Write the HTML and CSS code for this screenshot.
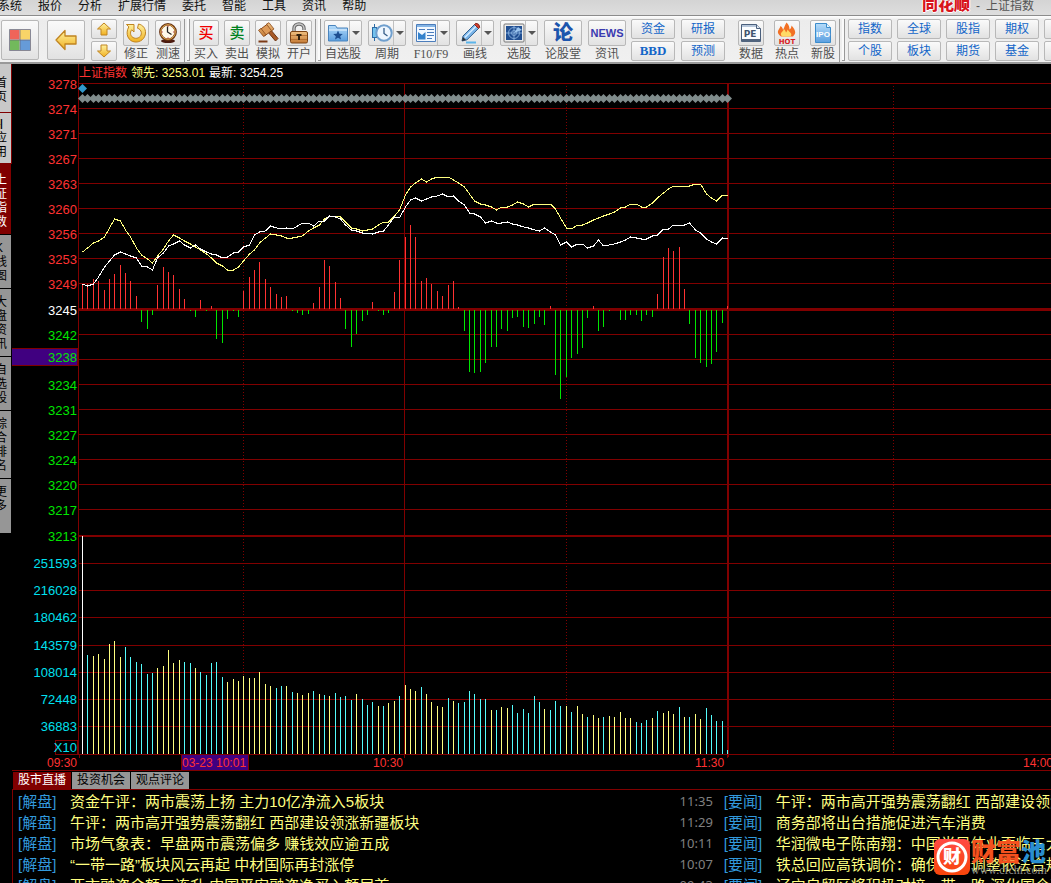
FILE: index.html
```html
<!DOCTYPE html>
<html lang="zh-CN">
<head>
<meta charset="utf-8">
<title>同花顺 - 上证指数</title>
<link rel="stylesheet" href="styles.css">
</head>
<body>
<svg class="defs" width="0" height="0" aria-hidden="true">
  <defs>
    <linearGradient id="gold" x1="0" y1="0" x2="0" y2="1"><stop offset="0" stop-color="#fff2a0"/><stop offset="1" stop-color="#f0b020"/></linearGradient>
    <linearGradient id="sky" x1="0" y1="0" x2="0" y2="1"><stop offset="0" stop-color="#b5dcfa"/><stop offset="1" stop-color="#5b9fe0"/></linearGradient>
    <linearGradient id="wood" x1="0" y1="0" x2="0" y2="1"><stop offset="0" stop-color="#f0c080"/><stop offset="1" stop-color="#c47a35"/></linearGradient>
    <linearGradient id="badge" x1="0" y1="0" x2="0" y2="1"><stop offset="0" stop-color="#ff4a45"/><stop offset="1" stop-color="#f8450a"/></linearGradient>
  </defs>
</svg>

<header class="menubar">
  <nav class="menu">
    <a href="#">系统</a><a href="#">报价</a><a href="#">分析</a><a href="#">扩展行情</a><a href="#">委托</a><a href="#">智能</a><a href="#">工具</a><a href="#">资讯</a><a href="#">帮助</a>
  </nav>
  <div class="caption"><strong class="brand">同花顺</strong><span>-</span><span>上证指数</span></div>
</header>

<div class="toolbar">
  <div class="group group-nav">
    <button class="key tile tile-home" aria-label="主页"><svg width="22" height="22" viewBox="0 0 22 22"><rect x="1" y="1" width="9.5" height="9.5" fill="#f0645a"/><rect x="11" y="1" width="10" height="9.5" fill="#f8d468"/><rect x="1" y="11" width="9.5" height="10" fill="#72b95c"/><rect x="11" y="11" width="10" height="10" fill="#669bd8"/><path d="M.5.5h21v21H.5zM11 1v20M1 11h20" fill="none" stroke="#667" stroke-opacity=".75"/></svg></button>
    <button class="key tile" aria-label="后退"><svg width="24" height="22" viewBox="0 0 24 22"><path d="M2 11L11 1.500V7h11v8H11v5.500z" fill="url(#gold)" stroke="#c08420" stroke-width="1.300" stroke-linejoin="round"/></svg></button>
    <div class="stack stack-arrows">
      <button class="key" aria-label="上翻"><svg width="16" height="14" viewBox="0 0 16 14"><path d="M8 1l6.500 6H11v6H5V7H1.500z" fill="url(#gold)" stroke="#c08420" stroke-linejoin="round"/></svg></button>
      <button class="key" aria-label="下翻"><svg width="16" height="14" viewBox="0 0 16 14"><path d="M8 13l6.500-6H11V1H5v6H1.500z" fill="url(#gold)" stroke="#c08420" stroke-linejoin="round"/></svg></button>
    </div>
    <button class="tool"><span class="key"><svg width="22" height="22" viewBox="0 0 22 22"><path d="M1.500 2.500H9V10L6.700 7.800C4.500 10.500 5.500 14.800 9 16c4 1.300 7.800-1.500 7.300-5.500C16 8.300 14.600 6.800 12.500 6.200L13.500 2C18 3 20.700 6.500 20.500 11c-.3 5.500-5 9.500-10.500 9C3.500 19.500-.3 12 3.800 4.900z" fill="url(#gold)" stroke="#c08420" stroke-linejoin="round"/></svg></span>修正</button>
    <button class="tool"><span class="key"><svg width="22" height="22" viewBox="0 0 22 22"><ellipse cx="11" cy="19" rx="7" ry="2" fill="#4b1a10"/><circle cx="11" cy="10" r="7.700" fill="#fff8e8" stroke="#6a3514" stroke-width="2.400"/><circle cx="11" cy="10" r="7.300" fill="none" stroke="#e8b050"/><path d="M10.500 4.500V10l4 2.500" fill="none" stroke="#222" stroke-width="1.300"/><path d="M11 3.500v1.200M11 15.500v1.200M4.500 10h1.200M16.200 10h1.200" stroke="#a22"/></svg></span>测速</button>
  </div>
  <i class="divider"></i>
  <div class="group group-trade">
    <button class="tool"><span class="key glyph buy">买</span>买入</button>
    <button class="tool"><span class="key glyph sell">卖</span>卖出</button>
    <button class="tool"><span class="key"><svg width="22" height="22" viewBox="0 0 22 22"><path d="M10 9l3-2 8 9.500-2.500 2.500z" fill="#a85a28" stroke="#6e3512"/><path d="M2.500 8l8-6 5 6-8 6z" fill="#dd9a58" stroke="#8a4a1c"/><path d="M1.500 8.300L4 6.500l5 6.300-2.500 1.700zM9.500 2L12 .7l5 6.300-2.500 1.800z" fill="url(#wood)" stroke="#8a4a1c" stroke-width=".8"/><path d="M1.500 18.500h9v2h-9z" fill="#7c3a16"/></svg></span>模拟</button>
    <button class="tool"><span class="key"><svg width="22" height="22" viewBox="0 0 22 22"><path d="M6 10V6.500c0-6 10-6 10 0V8" fill="none" stroke="#666" stroke-width="3.400"/><path d="M6 10V6.500c0-6 10-6 10 0V8" fill="none" stroke="#c8c8c8" stroke-width="1.400"/><rect x="2.500" y="9.500" width="17" height="11.500" rx="1.500" fill="url(#wood)" stroke="#7c4415"/><path d="M3 13.500h16M3 17.500h16" stroke="#a96428" stroke-width=".7"/><path d="M8.500 12h5v2h-1.500v4h-2v-4H8.500z" fill="#33220f"/></svg></span>开户</button>
  </div>
  <i class="divider"></i>
  <div class="group group-quote">
    <button class="tool"><span class="key split"><svg width="22" height="20" viewBox="0 0 22 20"><path d="M1.500 18V2.500h7L10 5h10.500v13z" fill="url(#sky)" stroke="#4a84bd"/><path d="M2 7h18" stroke="#e8f5ff"/><path d="M11 7.500l1.400 3.200 3.400.3-2.600 2.200.8 3.400-3-1.800-3 1.800.8-3.400L6.200 11l3.400-.3z" fill="#1e4f91"/></svg><i class="caret"></i></span>自选股</button>
    <button class="tool"><span class="key split"><svg width="22" height="20" viewBox="0 0 22 20"><path d="M3.500 1v17" stroke="#2c6ba5"/><rect x="1.500" y="4.500" width="4" height="10" fill="#73c2ee" stroke="#2c6ba5"/><circle cx="13" cy="10" r="7.700" fill="#eef6fe" stroke="#6f9fce" stroke-width="2"/><path d="M13 5v5.500l3.500 2.500" fill="none" stroke="#345c87" stroke-width="1.300"/></svg><i class="caret"></i></span>周期</button>
    <button class="tool latin"><span class="key split"><svg width="22" height="20" viewBox="0 0 22 20"><path d="M1.500 1.500h19v17h-19z" fill="#f2f8ff" stroke="#4c7dbb"/><path d="M2 2h18v2H2z" fill="#85b5e5"/><path d="M4 6.500h6M12 6.500h7M12 9.500h7M12 12.500h7M12 15.500h5" stroke="#4a7cbc"/><path d="M3 9l4 3 3.500-3v7.500H3z" fill="#3381cc"/></svg><i class="caret"></i></span>F10/F9</button>
    <button class="tool"><span class="key split"><svg width="22" height="22" viewBox="0 0 22 22"><path d="M7 20.500h10" stroke="#5cb5ea" stroke-width="2"/><path d="M3 19l1-5L15.500 2.500l4 4L8 17.800z" fill="#79b4e9" stroke="#33618f"/><path d="M5.800 15.500L17 4.300" stroke="#d7edff" stroke-width="1.500"/><path d="M15.500 2.500l1.300-1.200q3.500 0 4 4L19.500 6.500z" fill="#d34232" stroke="#85281e"/><path d="M3 19l1-4 3 3z" fill="#333"/></svg><i class="caret"></i></span>画线</button>
    <button class="tool"><span class="key split"><svg width="22" height="20" viewBox="0 0 22 20"><rect x="1" y="1" width="20" height="18" rx="1" fill="#ececec" stroke="#777"/><rect x="3" y="3" width="16" height="14" fill="#214f92"/><g fill="none" stroke="#7fa8d8"><circle cx="11" cy="10" r="5.500"/><circle cx="11" cy="10" r="2.500"/><path d="M11 3v14M3 10h16"/></g><path d="M11 10l4-6 4 3z" fill="#9dc6ef"/></svg><i class="caret"></i></span>选股</button>
    <button class="tool"><span class="key glyph forum">论</span>论股堂</button>
    <button class="tool"><span class="key news-logo">NEWS</span>资讯</button>
  </div>
  <div class="group group-funds">
    <div class="stack"><button class="key">资金</button><button class="key bbd">BBD</button></div>
    <div class="stack"><button class="key">研报</button><button class="key">预测</button></div>
  </div>
  <div class="group group-data">
    <button class="tool"><span class="key"><svg width="22" height="20" viewBox="0 0 22 20"><path d="M1.500 1.500h15l4 4v13h-19z" fill="#fbfdff" stroke="#4a5f7c"/><path d="M2 2h14v2H2z" fill="#b6c6da"/><path d="M16.500 1.500v4h4" fill="#dde6f0" stroke="#4a5f7c"/><path d="M2 16h18v3H2z" fill="#51647e"/><text x="10" y="14" text-anchor="middle" class="icon-pe">PE</text></svg></span>数据</button>
    <button class="tool"><span class="key"><svg width="22" height="22" viewBox="0 0 22 22"><path d="M5 14.500C-1.500 10 4 7 4.500 4c2 1.500 2.500 3 2.500 4C8.500 5 9 3 10.500.5 13 3 13.500 5 13.500 7.500c1.500-1 2-2.500 2-4C19 7.500 21 11 17 14.500z" fill="#f27024"/><path d="M6 14.500c-3-4 1-4.500 2-7.500 1.500 1.500 2 3.500 2 3.500s1.500-1.500 1.500-3c2 3 5.500 4 3 7z" fill="#ffdb66"/><text x="11" y="21.500" text-anchor="middle" class="icon-hot">HOT</text></svg></span>热点</button>
    <button class="tool"><span class="key"><svg width="22" height="22" viewBox="0 0 22 22"><path d="M3.500 1.500h11l4 4v15h-15z" fill="url(#sky)" stroke="#3c8ccb"/><path d="M14.500 1.500v4h4" fill="#e5f5ff" stroke="#3c8ccb"/><text x="11" y="14.500" text-anchor="middle" class="icon-ipo">IPO</text></svg></span>新股</button>
  </div>
  <i class="divider"></i>
  <div class="group group-market">
    <div class="stack"><button class="key">指数</button><button class="key">个股</button></div>
    <div class="stack"><button class="key">全球</button><button class="key">板块</button></div>
    <div class="stack"><button class="key">股指</button><button class="key">期货</button></div>
    <div class="stack"><button class="key">期权</button><button class="key">基金</button></div>
    <div class="stack"><button class="key" aria-label="债券"></button><button class="key" aria-label="外汇"></button></div>
  </div>
</div>

<div class="workspace">
  <aside class="pages">
    <button class="light page-home"><span>首页</span></button>
    <button class="light page-apps"><span><b>▸|</b>应用</span></button>
    <button class="current"><span>上证指数</span></button>
    <button><span>K线图</span></button>
    <button><span>大盘资讯</span></button>
    <button><span>自选股</span></button>
    <button><span>综合排名</span></button>
    <button class="page-more"><span>更多</span></button>
  </aside>
  <main class="content">
    <section class="chart">
      <svg id="chart" role="img" aria-label="上证指数 分时走势"></svg>
      <p class="legend"><span class="name">上证指数</span><span class="lead">领先: 3253.01</span><span class="last">最新: 3254.25</span></p>
    </section>
    <section class="news">
      <div class="tabs"><button class="active">股市直播</button><button>投资机会</button><button>观点评论</button></div>
      <div class="columns">
        <ul class="feed feed-live">
          <li><a class="tag" href="#">[解盘]</a><a class="title" href="#">资金午评：两市震荡上扬 主力10亿净流入5板块</a><time>11:35</time></li>
          <li><a class="tag" href="#">[解盘]</a><a class="title" href="#">午评：两市高开强势震荡翻红 西部建设领涨新疆板块</a><time>11:29</time></li>
          <li><a class="tag" href="#">[解盘]</a><a class="title" href="#">市场气象表：早盘两市震荡偏多 赚钱效应逾五成</a><time>10:11</time></li>
          <li><a class="tag" href="#">[解盘]</a><a class="title" href="#">“一带一路”板块风云再起 中材国际再封涨停</a><time>10:07</time></li>
          <li><a class="tag" href="#">[解盘]</a><a class="title" href="#">两市融资余额三连升 中国平安融资净买入额居首</a><time>09:43</time></li>
        </ul>
        <ul class="feed feed-top">
          <li><a class="tag" href="#">[要闻]</a><a class="title" href="#">午评：两市高开强势震荡翻红 西部建设领涨</a></li>
          <li><a class="tag" href="#">[要闻]</a><a class="title" href="#">商务部将出台措施促进汽车消费</a></li>
          <li><a class="tag" href="#">[要闻]</a><a class="title" href="#">华润微电子陈南翔：中国半导体业面临三大</a></li>
          <li><a class="tag" href="#">[要闻]</a><a class="title" href="#">铁总回应高铁调价：确保票价调整依法合规</a></li>
          <li><a class="tag" href="#">[要闻]</a><a class="title" href="#">辽宁自贸区将积极对接一带一路 深化国企改</a></li>
        </ul>
      </div>
    </section>
  </main>
</div>

<div class="watermark">
  <svg width="36" height="36" viewBox="0 0 36 36"><rect width="36" height="36" rx="6" fill="url(#badge)"/><circle cx="18" cy="18" r="14" fill="none" stroke="#fff" stroke-width="3"/><text x="18" y="24" text-anchor="middle" class="seal">财</text></svg>
  <div class="mark-text"><strong>财富<em>池</em></strong><small>www.cfchi.com</small></div>
</div>
<script src="chart.js"></script>
</body>
</html>
```

FILE: styles.css
```css
* { box-sizing: border-box; }
body {
  margin: 0;
  height: 100vh;
  display: flex;
  flex-direction: column;
  overflow: hidden;
  background: #000;
  font: 12px/14px "Liberation Sans", "Noto Sans CJK SC", sans-serif;
  position: relative;
}
button { font: inherit; color: inherit; border: 0; padding: 0; margin: 0; background: none; }
a { color: inherit; text-decoration: none; }
svg { display: block; }
.defs { position: absolute; }

.menubar {
  flex: none;
  height: 16px;
  overflow: hidden;
  display: flex;
  justify-content: space-between;
  background: linear-gradient(#d4d4d4, #dedede);
  border-bottom: 1px solid #8c8c8c;
  line-height: 12px;
  color: #111;
}
.menu { display: flex; gap: 16px; margin-left: -2px; white-space: nowrap; }
.caption { display: flex; gap: 6px; padding-right: 17px; color: #555; white-space: nowrap; line-height: 13px; }
.brand {
  font-size: 16px;
  line-height: 10px;
  font-weight: 900;
  color: #d8141c;
  text-shadow: 1px 0 #fff, -1px 0 #fff, 0 1px #fff;
}

.toolbar {
  flex: none;
  height: 48px;
  padding-top: 3px;
  display: flex;
  overflow: hidden;
  background: linear-gradient(#fff, #ececec 4px, #f0f0f0);
  border-bottom: 2px solid #999;
  color: #505050;
}
.group { display: flex; flex: none; align-items: flex-start; gap: 6px; }
.group-nav { padding-left: 1px; }
.tile-home { margin-right: 2px; }
.group-trade, .group-market { gap: 5px; }
.group-funds { margin-left: 5px; }
.group-data { margin-left: 13px; gap: 10px; }
.divider {
  flex: none;
  width: 7px;
  margin: 0 2px 0 3px;
  border-left: 1px solid #999;
  position: relative;
}
.divider::after {
  content: "";
  position: absolute;
  inset: 0 1px 1px 2px;
  border: solid #999;
  border-width: 0 1px 1px 0;
  background: #fafafa;
}
.key {
  display: flex;
  align-items: center;
  justify-content: center;
  border: 1px solid #b8b8b8;
  border-radius: 2px;
  background: linear-gradient(#fafafa, #e2e2e2);
}
.tile { width: 38px; height: 40px; margin-top: 1px; }
.stack { display: grid; gap: 2px; grid-template-rows: 20px 20px; width: 44px; color: #1265c8; }
.stack-arrows { width: 26px; }
.bbd { font: bold 13px/14px "Liberation Serif", serif; }
.tool {
  width: 26px;
  margin-top: 1px;
  display: flex;
  flex-direction: column;
  align-items: center;
  line-height: 16px;
  white-space: nowrap;
}
.tool .key { width: 100%; height: 26px; flex: none; }
.group-quote .tool { width: 38px; }
.latin { font: 12px/16px "Liberation Serif", serif; }
.split { justify-content: space-between; padding-left: 2px; }
.caret {
  align-self: stretch;
  width: 12px;
  border-left: 1px solid #c0c0c0;
  display: grid;
  place-items: center;
}
.caret::before { content: ""; border: 4px solid transparent; border-top-color: #555; border-bottom: 0; }
.glyph { font-size: 15px; font-weight: 500; }
.buy { color: #f00000; }
.sell { color: #00821e; }
.forum { font-size: 20px; font-weight: 900; color: #1c55ad; }
.news-logo { font: bold 11px/14px "Liberation Sans", sans-serif; color: #3a3ab0; }
.icon-pe { font: bold 9px "DejaVu Sans", sans-serif; fill: #41546f; }
.icon-hot { font: bold 7px "DejaVu Sans", sans-serif; fill: #d81c24; }
.icon-ipo { font: bold 8px "Liberation Sans", sans-serif; fill: #fff; }

.workspace { flex: 1; min-height: 0; display: flex; }
.pages { flex: none; width: 12px; overflow: hidden; display: flex; flex-direction: column; }
.pages button {
  flex: none;
  width: 11px;
  padding: 6px 0 5px;
  background: #969696;
  border-bottom: 1px solid #000;
  color: #000;
  text-align: left;
  line-height: 14px;
}
.pages span { display: block; width: 12px; margin-left: -5px; word-break: break-all; white-space: normal; }
.pages b { display: block; white-space: nowrap; font-size: 10px; }
.pages .light { width: 12px; background: #c8c8c8; border: solid #800000; border-width: 0 1px 1px 0; }
.pages .page-home { padding: 12px 0 8px; }
.pages .page-apps { padding: 4px 0; }
.pages .current { background: #800000; color: #fff; padding: 9px 0 5px; }
.pages .page-more { padding-bottom: 20px; }

.content { flex: 1; min-width: 0; display: flex; flex-direction: column; }
.chart { flex: none; position: relative; }
.chart > svg { width: 100%; height: 708px; }
.legend { position: absolute; left: 67px; top: 2px; margin: 0; display: flex; gap: 4px; white-space: nowrap; }
.name { color: #ff3232; }
.lead { color: #ffff80; }
.last { color: #fff; }
.axis { font: 13px "Liberation Sans", sans-serif; }
.time { font: 12px "Liberation Sans", sans-serif; fill: #ff3232; }

.news { flex: 1; min-height: 0; display: flex; flex-direction: column; }
.tabs { display: flex; gap: 1px; padding-left: 1px; }
.tabs button { width: 58px; height: 17px; line-height: 17px; background: #969696; color: #000; }
.tabs .active { background: #800000; color: #fff; }
.columns {
  flex: 1;
  min-height: 0;
  overflow: hidden;
  display: flex;
  border: solid #800000;
  border-width: 1px 0 0 1px;
}
.feed { margin: 0; padding: 1px 5px; list-style: none; font-size: 15px; line-height: 21px; }
.feed-live { flex: 0 0 68%; padding-right: 6px; }
.feed-top { flex: 1; min-width: 0; padding-right: 0; }
.feed li { display: flex; white-space: nowrap; }
.tag { flex: 0 0 52px; color: #3299dc; }
.title { flex: 1; min-width: 0; overflow: hidden; color: #ffff80; }
.feed time { font: 13px/21px "Noto Sans", sans-serif; color: #808080; }

.watermark { position: absolute; right: 4px; bottom: 7px; display: flex; gap: 1px; align-items: flex-start; white-space: nowrap; }
.seal { font: 900 18px "Noto Sans CJK SC", sans-serif; fill: #fff; }
.mark-text { width: 76px; }
.mark-text strong { display: block; font-size: 25px; line-height: 26px; font-weight: 900; color: #f4511e; }
.mark-text em { font-style: normal; color: #2a8fd0; }
.mark-text small { display: block; font: 12px/11px "Liberation Serif", serif; color: #8a8a8a; }
```

FILE: chart.js
```js
const NS = 'http://www.w3.org/2000/svg';
const svg = document.getElementById('chart');
const GRID = '#800000';
const LEFT = 66;
const ZERO = 245;
const BASE = 690;

function add(name, attrs, text) {
  const el = document.createElementNS(NS, name);
  for (const key in attrs) el.setAttribute(key, attrs[key]);
  if (text !== undefined) el.textContent = text;
  svg.appendChild(el);
}
const box = (x, y, width, height, fill) =>
  add('rect', { x, y, width, height, fill, 'shape-rendering': 'crispEdges' });
const framed = (x, y, width, height, fill) => {
  box(x, y, width, height, GRID);
  box(x + 1, y + 1, width - 2, height - 2, fill);
};
const minuteX = i => Math.round(70 + i * 5.375);

// Horizontal grid: price pane, then volume pane
const prices = [3278, 3274, 3271, 3267, 3263, 3260, 3256, 3253, 3249, 3245, 3242, 3238, 3234, 3231, 3227, 3224, 3220, 3217, 3213];
const priceY = [19, 44, 69, 94, 119, 144, 169, 194, 219, 245, 270, 295, 320, 345, 370, 395, 420, 445, 471];
const volumes = [251593, 216028, 180462, 143579, 108014, 72448, 36883];
const volumeY = [499, 526, 553, 581, 608, 635, 662];
priceY.concat(volumeY, BASE).forEach(y => box(LEFT, y, '100%', 1, GRID));
box(LEFT, ZERO - 1, '100%', 3, GRID);
box(LEFT, 471, '100%', 2, GRID);
box(0, 706, '100%', 1, GRID);

// Vertical grid
box(LEFT, 0, 1, BASE, GRID);
box(392, 19, 1, BASE - 16, GRID);
box(715, 19, 2, BASE - 16, GRID);
[231, 554, 881].forEach(x => add('line', {
  x1: x + 0.5, x2: x + 0.5, y1: 19, y2: BASE,
  stroke: GRID, 'stroke-dasharray': '1 2', 'shape-rendering': 'crispEdges'
}));

// Price labels
framed(-1, 284, LEFT + 1, 18, '#400080');
prices.forEach((p, i) => add('text', {
  x: 65, y: (p === 3238 ? 293 : priceY[i] + 1) + 5, 'text-anchor': 'end', class: 'axis',
  fill: i < 9 ? '#ff3232' : i === 9 ? '#ffffff' : '#00e600'
}, p));
volumes.forEach((v, i) => add('text', {
  x: 65, y: volumeY[i] + 5, 'text-anchor': 'end', class: 'axis', fill: '#00e0f0'
}, v));
framed(43, 676, 23, 15, '#000');
add('text', { x: 65, y: 688, 'text-anchor': 'end', class: 'axis', fill: '#00e0f0' }, 'X10');

// Lead/lag histogram, in pixels from the zero line
const force = [
  25, 25, 30, 28, 19, 30, 35, 44, 36, 28, 13, -12, -19, -5, 24, 42, 37, 34, 20, 10,
  -1, -7, 9, -1, 3, -29, -33, -9, -1, -7, 18, 32, 39, 47, 30, 22, 15, 12, 13, -1,
  -3, -5, -4, 6, 22, 49, 43, 27, 11, -19, -37, -24, -11, -5, 7, -1, -5, -3, 17, 49,
  72, 84, 72, 28, 31, 25, 18, 13, 24, 28, 2, -21, -62, -63, -62, -53, -37, -37, -19, -21,
  -8, -7, -17, -18, -14, -7, -15, 3, -65, -89, -67, -48, -44, -38, -8, 3, -21, -17, -1, 0,
  -10, -10, -5, -5, -11, -5, -7, 15, 52, 61, 58, 62, 20, -14, -48, -53, -57, -54, -42, -13, 3
];
force.forEach((v, i) => {
  if (v > 0) box(minuteX(i), ZERO - v, 1, v, '#ff3232');
  if (v < 0) box(minuteX(i), ZERO + 1, 1, -v, '#00e600');
});

// Volume bars
const volume = [
  218, 99, 98, 100, 95, 110, 113, 97, 107, 97, 92, 90, 80, 81, 86, 88, 104, 91, 94, 92,
  91, 86, 82, 79, 91, 92, 77, 72, 75, 73, 78, 76, 76, 82, 70, 68, 66, 68, 68, 62,
  61, 59, 61, 63, 60, 59, 58, 61, 57, 58, 54, 60, 55, 49, 52, 48, 48, 51, 53, 58,
  69, 65, 63, 67, 60, 52, 48, 47, 56, 53, 51, 52, 63, 60, 55, 55, 44, 44, 47, 46,
  49, 41, 45, 41, 58, 52, 45, 44, 53, 48, 48, 42, 48, 40, 37, 39, 36, 37, 38, 37,
  42, 36, 36, 32, 31, 34, 36, 43, 41, 43, 40, 47, 37, 37, 40, 35, 46, 39, 33, 33, 4
];
const tint = 'wcyyyyyyccccccyyyyyccycccccyyyyyyyyyccycyyycycyccccycccycyycyyycyyyycyccccccycyyccccccycccycyycyycyyyyycccycyyycycyycccccyc';
const colors = { w: '#ffffff', c: '#54fcfc', y: '#ffff80' };
volume.forEach((v, i) => box(minuteX(i), BASE - v, 1, v, colors[tint[i]]));

// Index curves: thirds of a pixel below the top of the plotting band
const latest = [
  373, 379, 371, 352, 322, 304, 286, 277, 283, 287, 295, 319, 320, 331, 295, 278, 259, 251, 244, 256,
  265, 256, 268, 275, 283, 285, 295, 291, 280, 277, 260, 256, 226, 217, 212, 199, 203, 207, 205, 208,
  197, 190, 190, 198, 184, 183, 167, 172, 178, 195, 211, 212, 219, 220, 223, 215, 214, 195, 171, 175,
  140, 119, 115, 122, 118, 112, 108, 101, 112, 109, 124, 134, 160, 163, 172, 190, 184, 190, 190, 187,
  193, 194, 202, 203, 211, 214, 205, 217, 226, 256, 245, 260, 253, 253, 265, 259, 241, 259, 254, 253,
  245, 239, 232, 235, 238, 238, 227, 226, 208, 208, 196, 196, 196, 190, 211, 220, 236, 247, 251, 235, 238
];
const lead = [
  277, 263, 250, 242, 230, 205, 176, 182, 209, 232, 263, 284, 296, 310, 289, 268, 242, 224, 235, 242,
  251, 262, 269, 283, 295, 310, 318, 331, 331, 322, 304, 283, 269, 250, 235, 223, 224, 229, 235, 235,
  230, 229, 214, 203, 195, 177, 169, 169, 170, 187, 203, 208, 214, 209, 208, 196, 187, 187, 169, 149,
  105, 80, 68, 58, 67, 58, 52, 52, 52, 59, 68, 80, 101, 122, 132, 134, 142, 149, 142, 142,
  134, 127, 133, 142, 133, 133, 133, 133, 148, 175, 203, 208, 196, 196, 188, 181, 175, 169, 161, 155,
  143, 142, 133, 133, 142, 142, 128, 115, 100, 86, 79, 79, 79, 79, 73, 73, 101, 114, 122, 106, 106
];
[[lead, '#ffff80'], [latest, '#ffffff']].forEach(([series, stroke]) => add('polyline', {
  points: series.map((v, i) => `${minuteX(i) + 0.5},${Math.round(96 + v / 3)}`).join(' '),
  fill: 'none', stroke, 'shape-rendering': 'crispEdges'
}));

// Event markers along the top
for (let i = 0; i <= 120; i++) {
  const x = minuteX(i) + 0.5;
  add('path', { d: `M${x - 4.5} 34.5l4.5-4.500 4.5 4.500-4.500 4.500z`, fill: '#808c8c' });
}
add('path', { d: 'M66 24.500l4.500-4.500 4.500 4.500-4.500 4.500z', fill: '#3299cc' });

// Time axis
[67, 392, 715].forEach(x => box(x, BASE, 1, 4, GRID));
framed(169, 690, 68, 17, '#400080');
[[35, '09:30'], [170, '03-23 10:01'], [361, '10:30'], [683, '11:30'], [1011, '14:00']].forEach(([x, t]) =>
  add('text', { x, y: 703, class: 'time' }, t));
```
